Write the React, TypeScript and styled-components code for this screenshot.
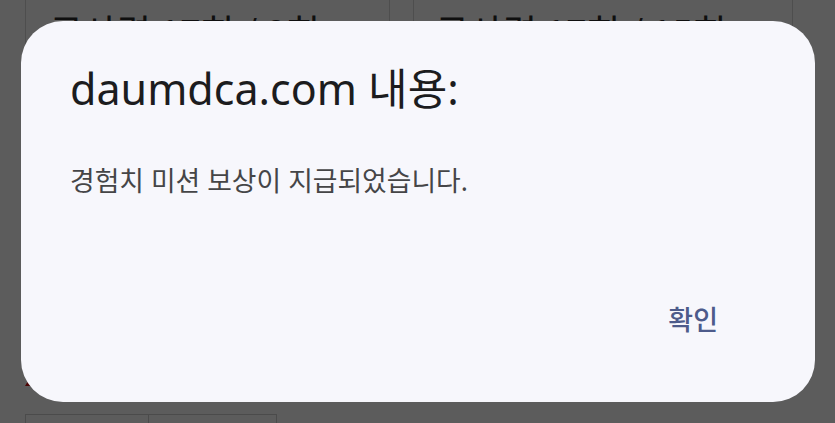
import styled, { createGlobalStyle } from "styled-components";

const Global = createGlobalStyle`
  html, body {
    margin: 0;
    padding: 0;
    width: 835px;
    height: 423px;
    overflow: hidden;
    background: #ffffff;
    font-family: "Noto Sans", "Noto Sans CJK KR", sans-serif;
  }
`;

const Screen = styled.div`
  position: relative;
  width: 835px;
  height: 423px;
  overflow: hidden;
  background: #ffffff;
`;

// page content that sits behind the dimmed overlay
const Page = styled.div`
  display: flex;
  flex-direction: column;
  padding: 0 0 0 25px;
  height: 100%;
  box-sizing: border-box;
`;

const StatRow = styled.div`
  display: grid;
  grid-template-columns: 364px 22px 381px;
  height: 60px;
  border-left: 1px solid #d8d8d8;
  width: 768px;
`;

const StatCell = styled.div`
  border-right: 1px solid #d8d8d8;
  padding: 13px 0 0 23px;
  font-size: 37px;
  color: #2a2a2a;
  line-height: 1;
  white-space: nowrap;
  font-family: "Noto Sans CJK KR", sans-serif;
`;

const Spacer = styled.div`
  flex: 1;
`;

const Warn = styled.div`
  width: 0;
  height: 0;
  border-left: 6px solid transparent;
  border-right: 6px solid transparent;
  border-bottom: 10px solid #d01010;
  margin: 0 0 28px 0;
`;

const Tabs = styled.div`
  display: grid;
  grid-template-columns: 122px 128px;
  width: 250px;
  height: 8px;
  border: 1px solid #d0d0d0;
  border-bottom: none;
`;

const TabCell = styled.div`
  & + & {
    border-left: 1px solid #d0d0d0;
  }
`;

const Scrim = styled.div`
  position: absolute;
  inset: 0;
  background: rgba(0, 0, 0, 0.64);
`;

const Dialog = styled.div`
  position: absolute;
  left: 21px;
  top: 21px;
  width: 794px;
  height: 381px;
  box-sizing: border-box;
  background: #f7f7fc;
  border-radius: 42px;
  padding: 40px 49px 0 49px;
  display: flex;
  flex-direction: column;
`;

const Title = styled.h2`
  margin: 0;
  font-weight: 400;
  font-size: 43px;
  line-height: 56px;
  color: #1c1c1e;
`;

const Message = styled.p`
  margin: 47px 0 0 0;
  font-size: 26.8px;
  line-height: 34px;
  color: #454547;
`;

const Actions = styled.div`
  margin-top: auto;
  display: flex;
  justify-content: flex-end;
  padding: 0 48px 66px 0;
`;

const ActionButton = styled.button`
  border: none;
  background: none;
  padding: 0;
  font-family: "Noto Sans CJK KR", sans-serif;
  font-size: 27px;
  font-weight: 500;
  line-height: 34px;
  color: #4d5b8b;
`;

export default function App() {
  return (
    <Screen>
      <Global />
      <Page>
        <StatRow>
          <StatCell>군사력 17회 / 8회</StatCell>
          <StatCell />
          <StatCell>군사력 17회 / 15회</StatCell>
        </StatRow>
        <Spacer />
        <Warn />
        <Tabs>
          <TabCell />
          <TabCell />
        </Tabs>
      </Page>
      <Scrim />
      <Dialog>
        <Title>daumdca.com 내용:</Title>
        <Message>경험치 미션 보상이 지급되었습니다.</Message>
        <Actions>
          <ActionButton>확인</ActionButton>
        </Actions>
      </Dialog>
    </Screen>
  );
}
